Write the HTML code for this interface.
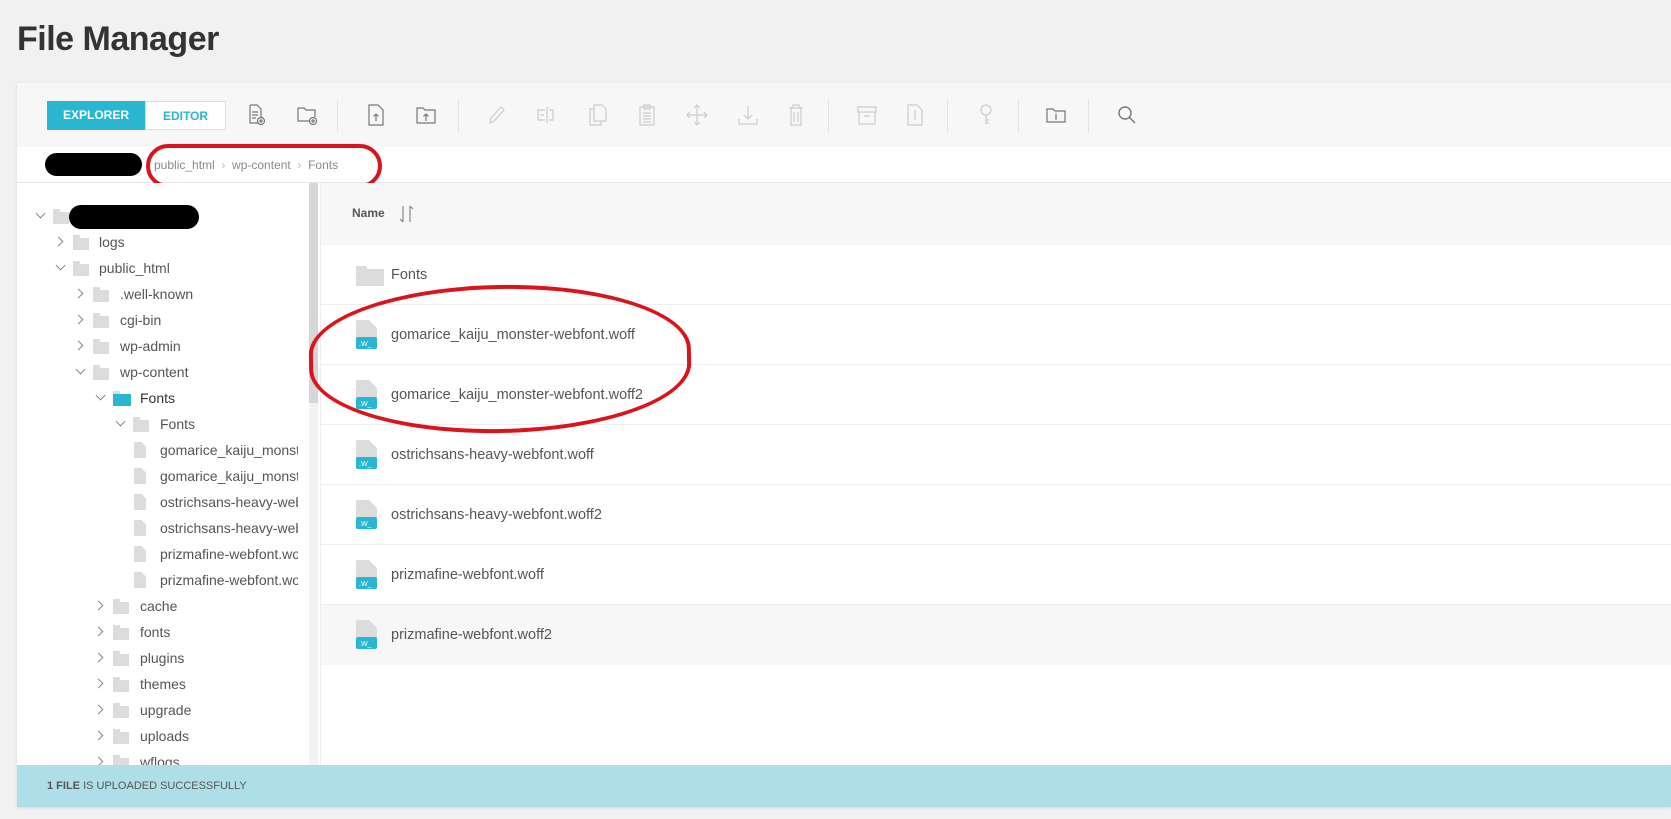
<!DOCTYPE html>
<html><head><meta charset="utf-8">
<style>
*{margin:0;padding:0;box-sizing:border-box}
body{width:1671px;height:819px;background:#f1f1f1;font-family:"Liberation Sans",sans-serif;position:relative;overflow:hidden;color:#555}
.a{position:absolute}
h1{position:absolute;left:17px;top:20px;font-size:34px;font-weight:bold;color:#333;letter-spacing:-0.5px}
.panel{position:absolute;left:17px;top:83px;width:1654px;height:724px;background:#fff;box-shadow:0 1px 3px rgba(0,0,0,.1)}
.tb{position:absolute;left:17px;top:83px;width:1654px;height:64px;background:#f7f7f7}
.btn{position:absolute;top:101px;height:29px;font-size:12px;font-weight:bold;line-height:29px;text-align:center}
.sep{position:absolute;top:100px;width:1px;height:32px;background:#e3e3e3}
.ic{position:absolute;top:104px}
.tree{position:absolute;left:17px;top:183px;width:303px;height:582px;overflow:hidden;background:#fff}
.tr{position:absolute;font-size:14px;color:#555;white-space:nowrap;line-height:20px}
.tr.c{width:138px;overflow:hidden}
.chev{position:absolute;width:7px;height:7px;border-right:1.3px solid #888;border-bottom:1.3px solid #888}
.fold{position:absolute;width:16px;height:12px;background:#dcdcdc}
.fold:before{content:"";position:absolute;left:0;top:-3px;width:7px;height:3px;background:#dcdcdc}
.file{position:absolute;width:12px;height:16px;background:#dcdcdc;clip-path:polygon(0 0,65% 0,100% 30%,100% 100%,0 100%)}
.row{position:absolute;left:321px;width:1350px;height:60px;border-bottom:1px solid #eee;font-size:14.5px;color:#555}
.row span{position:absolute;left:70px;top:50%;transform:translateY(-50%)}
.fi{position:absolute;left:35px;top:50%;margin-top:-15px;width:21px;height:29px}
</style></head><body>
<h1>File Manager</h1>
<div class="panel"></div>
<div class="tb"></div>
<div class="btn" style="left:47px;width:98px;background:#29b6d1;color:#fff">EXPLORER</div>
<div class="btn" style="left:145px;width:81px;background:#fff;border:1px solid #ddd;color:#29b6d1">EDITOR</div>
<svg class="ic" style="left:248px" width="18" height="22" viewBox="0 0 18 22" fill="none" stroke="#777" stroke-width="1.2"><path d="M2 1h7l4 4v9M2 1v18h8"/><path d="M4 8h6M4 11h6M4 14h4"/><circle cx="13" cy="17" r="3.5"/><path d="M13 15v4M11 17h4"/></svg>
<svg class="ic" style="left:297px" width="22" height="22" viewBox="0 0 22 22" fill="none" stroke="#777" stroke-width="1.2"><path d="M1 4h6l2 2h9v7M1 4v13h12"/><circle cx="16" cy="17" r="3.5"/><path d="M16 15v4M14 17h4"/></svg>
<div class="sep" style="left:337px"></div>
<svg class="ic" style="left:368px" width="16" height="22" viewBox="0 0 16 22" fill="none" stroke="#777" stroke-width="1.2"><path d="M1 1h9l5 5v15H1z"/><path d="M8 17V10M5.5 12.5 8 10l2.5 2.5"/></svg>
<svg class="ic" style="left:416px" width="20" height="22" viewBox="0 0 20 22" fill="none" stroke="#777" stroke-width="1.2"><path d="M1 4h6l2 2h10v13H1z"/><path d="M10 17v-7M7.5 12.5 10 10l2.5 2.5"/></svg>
<div class="sep" style="left:458px"></div>
<svg class="ic" style="left:487px" width="18" height="22" viewBox="0 0 18 22" fill="none" stroke="#ccc" stroke-width="1.2"><path d="M3 19l1-5L14 3l3 3L7 17z"/></svg>
<svg class="ic" style="left:536px" width="20" height="22" viewBox="0 0 20 22" fill="none" stroke="#ccc" stroke-width="1.2"><path d="M9 6H2v10h7M13 6h4v10h-4M11 3v16"/><path d="M4 11h4"/></svg>
<svg class="ic" style="left:589px" width="18" height="22" viewBox="0 0 18 22" fill="none" stroke="#ccc" stroke-width="1.2"><path d="M5 1h8l4 4v12H5z"/><path d="M5 5H1v16h11v-4"/></svg>
<svg class="ic" style="left:638px" width="18" height="22" viewBox="0 0 18 22" fill="none" stroke="#ccc" stroke-width="1.2"><path d="M2 3h14v18H2z"/><path d="M6 1h6v4H6zM5 9h8M5 12h8M5 15h8M5 18h8"/></svg>
<svg class="ic" style="left:686px" width="22" height="22" viewBox="0 0 22 22" fill="none" stroke="#ccc" stroke-width="1.2"><path d="M11 1v20M1 11h20M8 4l3-3 3 3M8 18l3 3 3-3M4 8l-3 3 3 3M18 8l3 3-3 3"/></svg>
<svg class="ic" style="left:738px" width="20" height="22" viewBox="0 0 20 22" fill="none" stroke="#ccc" stroke-width="1.2"><path d="M10 2v13M6 11l4 4 4-4M1 15v5h18v-5"/></svg>
<svg class="ic" style="left:788px" width="16" height="22" viewBox="0 0 16 22" fill="none" stroke="#ccc" stroke-width="1.2"><path d="M1 4h14M5 4V1h6v3M3 4v17h10V4M6 8v10M10 8v10"/></svg>
<div class="sep" style="left:828px"></div>
<svg class="ic" style="left:857px" width="20" height="22" viewBox="0 0 20 22" fill="none" stroke="#ccc" stroke-width="1.2"><path d="M1 3h18v5H1zM2 8v12h16V8M7 12h6"/></svg>
<svg class="ic" style="left:907px" width="16" height="22" viewBox="0 0 16 22" fill="none" stroke="#ccc" stroke-width="1.2"><path d="M1 1h9l5 5v15H1z"/><path d="M8 6v10"/></svg>
<div class="sep" style="left:947px"></div>
<svg class="ic" style="left:979px" width="14" height="22" viewBox="0 0 14 22" fill="none" stroke="#ccc" stroke-width="1.2"><circle cx="7" cy="6" r="5"/><path d="M7 11v9M7 16h3M7 19h3"/></svg>
<div class="sep" style="left:1018px"></div>
<svg class="ic" style="left:1046px" width="20" height="22" viewBox="0 0 20 22" fill="none" stroke="#777" stroke-width="1.2"><path d="M1 5h6l2 2h10v11H1z"/><path d="M10 10v6M10 8.5v.5"/></svg>
<div class="sep" style="left:1088px"></div>
<svg class="ic" style="left:1117px" width="20" height="22" viewBox="0 0 20 22" fill="none" stroke="#777" stroke-width="1.4"><circle cx="8" cy="9" r="6"/><path d="M12.5 13.5 18 19"/></svg>
<div class="a" style="left:17px;top:147px;width:1654px;height:36px;background:#fff;border-bottom:1px solid #e5e5e5"></div>
<div class="a" style="left:45px;top:153px;width:97px;height:23px;background:#000;border-radius:12px"></div>
<div class="a" style="left:154px;top:158px;font-size:12px;color:#888">public_html&nbsp;&nbsp;<span style="color:#bbb">›</span>&nbsp;&nbsp;wp-content&nbsp;&nbsp;<span style="color:#bbb">›</span>&nbsp;&nbsp;Fonts</div>
<div class="a" style="left:146px;top:144px;width:236px;height:44px;border:4px solid #d9141b;border-radius:22px/22px"></div>
<div class="tree">
<div class="a" style="left:292px;top:0;width:9px;height:582px;background:#f2f2f2"></div>
<div class="a" style="left:292px;top:0;width:9px;height:220px;background:#d6d6d6"></div>
<div class="chev" style="left:20px;top:27px;transform:rotate(45deg)"></div>
<div class="fold" style="left:36px;top:29px"></div>
<div class="a" style="left:52px;top:22px;width:130px;height:24px;background:#000;border-radius:12px"></div>
<div class="chev" style="left:38px;top:55px;transform:rotate(-45deg)"></div><div class="fold" style="left:56px;top:55px"></div><div class="tr" style="left:82px;top:49px">logs</div>
<div class="chev" style="left:40px;top:79px;transform:rotate(45deg)"></div><div class="fold" style="left:56px;top:81px"></div><div class="tr" style="left:82px;top:75px">public_html</div>
<div class="chev" style="left:58px;top:107px;transform:rotate(-45deg)"></div><div class="fold" style="left:76px;top:107px"></div><div class="tr" style="left:103px;top:101px">.well-known</div>
<div class="chev" style="left:58px;top:133px;transform:rotate(-45deg)"></div><div class="fold" style="left:76px;top:133px"></div><div class="tr" style="left:103px;top:127px">cgi-bin</div>
<div class="chev" style="left:58px;top:159px;transform:rotate(-45deg)"></div><div class="fold" style="left:76px;top:159px"></div><div class="tr" style="left:103px;top:153px">wp-admin</div>
<div class="chev" style="left:60px;top:183px;transform:rotate(45deg)"></div><div class="fold" style="left:76px;top:185px"></div><div class="tr" style="left:103px;top:179px">wp-content</div>
<div class="chev" style="left:80px;top:209px;transform:rotate(45deg)"></div><div class="fold" style="left:96px;top:211px;background:#29b6d1;width:18px"></div><div class="tr" style="left:123px;top:205px;color:#333">Fonts</div>
<div class="chev" style="left:100px;top:235px;transform:rotate(45deg)"></div><div class="fold" style="left:116px;top:237px"></div><div class="tr" style="left:143px;top:231px">Fonts</div>
<div class="file" style="left:117px;top:259px"></div><div class="tr c" style="left:143px;top:257px">gomarice_kaiju_monster-webfont.woff</div>
<div class="file" style="left:117px;top:285px"></div><div class="tr c" style="left:143px;top:283px">gomarice_kaiju_monster-webfont.woff2</div>
<div class="file" style="left:117px;top:311px"></div><div class="tr c" style="left:143px;top:309px">ostrichsans-heavy-webfont.woff</div>
<div class="file" style="left:117px;top:337px"></div><div class="tr c" style="left:143px;top:335px">ostrichsans-heavy-webfont.woff2</div>
<div class="file" style="left:117px;top:363px"></div><div class="tr c" style="left:143px;top:361px">prizmafine-webfont.woff</div>
<div class="file" style="left:117px;top:389px"></div><div class="tr c" style="left:143px;top:387px">prizmafine-webfont.woff2</div>
<div class="chev" style="left:78px;top:419px;transform:rotate(-45deg)"></div><div class="fold" style="left:96px;top:419px"></div><div class="tr" style="left:123px;top:413px">cache</div>
<div class="chev" style="left:78px;top:445px;transform:rotate(-45deg)"></div><div class="fold" style="left:96px;top:445px"></div><div class="tr" style="left:123px;top:439px">fonts</div>
<div class="chev" style="left:78px;top:471px;transform:rotate(-45deg)"></div><div class="fold" style="left:96px;top:471px"></div><div class="tr" style="left:123px;top:465px">plugins</div>
<div class="chev" style="left:78px;top:497px;transform:rotate(-45deg)"></div><div class="fold" style="left:96px;top:497px"></div><div class="tr" style="left:123px;top:491px">themes</div>
<div class="chev" style="left:78px;top:523px;transform:rotate(-45deg)"></div><div class="fold" style="left:96px;top:523px"></div><div class="tr" style="left:123px;top:517px">upgrade</div>
<div class="chev" style="left:78px;top:549px;transform:rotate(-45deg)"></div><div class="fold" style="left:96px;top:549px"></div><div class="tr" style="left:123px;top:543px">uploads</div>
<div class="chev" style="left:78px;top:575px;transform:rotate(-45deg)"></div><div class="fold" style="left:96px;top:575px"></div><div class="tr" style="left:123px;top:569px">wflogs</div>
</div>
<div class="a" style="left:320px;top:183px;width:1px;height:582px;background:#eee"></div>
<div class="a" style="left:321px;top:183px;width:1350px;height:62px;background:#f7f7f7"></div>
<div class="a" style="left:352px;top:206px;font-size:12px;color:#555;font-weight:bold">Name</div>
<svg class="a" style="left:398px;top:204px" width="18" height="20" viewBox="0 0 18 20" fill="none" stroke="#888" stroke-width="1.2"><path d="M5 2v16M2 15l3 3M12 18V2M15 5l-3-3"/></svg>
<div class="row" style="top:245px"><svg class="fi" style="margin-top:-11px;height:22px;width:28px" viewBox="0 0 28 22"><path d="M0 2h10l2 3h16v17H0z" fill="#dcdcdc"/></svg><span>Fonts</span></div>
<div class="row" style="top:305px"><svg class="fi" viewBox="0 0 21 29"><path d="M0 2a2 2 0 0 1 2-2h11l8 8v19a2 2 0 0 1-2 2H2a2 2 0 0 1-2-2z" fill="#dcdcdc"/><rect x="0" y="17" width="21" height="12" rx="2" fill="#29b6d1"/><text x="3" y="26" font-size="7" fill="#fff" font-family="Liberation Sans">.W_</text></svg><span>gomarice_kaiju_monster-webfont.woff</span></div>
<div class="row" style="top:365px"><svg class="fi" viewBox="0 0 21 29"><path d="M0 2a2 2 0 0 1 2-2h11l8 8v19a2 2 0 0 1-2 2H2a2 2 0 0 1-2-2z" fill="#dcdcdc"/><rect x="0" y="17" width="21" height="12" rx="2" fill="#29b6d1"/><text x="3" y="26" font-size="7" fill="#fff" font-family="Liberation Sans">.W_</text></svg><span>gomarice_kaiju_monster-webfont.woff2</span></div>
<div class="row" style="top:425px"><svg class="fi" viewBox="0 0 21 29"><path d="M0 2a2 2 0 0 1 2-2h11l8 8v19a2 2 0 0 1-2 2H2a2 2 0 0 1-2-2z" fill="#dcdcdc"/><rect x="0" y="17" width="21" height="12" rx="2" fill="#29b6d1"/><text x="3" y="26" font-size="7" fill="#fff" font-family="Liberation Sans">.W_</text></svg><span>ostrichsans-heavy-webfont.woff</span></div>
<div class="row" style="top:485px"><svg class="fi" viewBox="0 0 21 29"><path d="M0 2a2 2 0 0 1 2-2h11l8 8v19a2 2 0 0 1-2 2H2a2 2 0 0 1-2-2z" fill="#dcdcdc"/><rect x="0" y="17" width="21" height="12" rx="2" fill="#29b6d1"/><text x="3" y="26" font-size="7" fill="#fff" font-family="Liberation Sans">.W_</text></svg><span>ostrichsans-heavy-webfont.woff2</span></div>
<div class="row" style="top:545px"><svg class="fi" viewBox="0 0 21 29"><path d="M0 2a2 2 0 0 1 2-2h11l8 8v19a2 2 0 0 1-2 2H2a2 2 0 0 1-2-2z" fill="#dcdcdc"/><rect x="0" y="17" width="21" height="12" rx="2" fill="#29b6d1"/><text x="3" y="26" font-size="7" fill="#fff" font-family="Liberation Sans">.W_</text></svg><span>prizmafine-webfont.woff</span></div>
<div class="row" style="top:605px;background:#f7f7f7;border-bottom:none"><svg class="fi" viewBox="0 0 21 29"><path d="M0 2a2 2 0 0 1 2-2h11l8 8v19a2 2 0 0 1-2 2H2a2 2 0 0 1-2-2z" fill="#dcdcdc"/><rect x="0" y="17" width="21" height="12" rx="2" fill="#29b6d1"/><text x="3" y="26" font-size="7" fill="#fff" font-family="Liberation Sans">.W_</text></svg><span>prizmafine-webfont.woff2</span></div>
<div class="a" style="left:309px;top:285px;width:382px;height:148px;border:4px solid #d9141b;border-radius:50%/45%;transform:rotate(-1deg)"></div>
<div class="a" style="left:17px;top:765px;width:1654px;height:42px;background:#aedfe8"></div>
<div class="a" style="left:47px;top:780px;font-size:11px;color:#555"><b>1 FILE</b> IS UPLOADED SUCCESSFULLY</div>
</body></html>
